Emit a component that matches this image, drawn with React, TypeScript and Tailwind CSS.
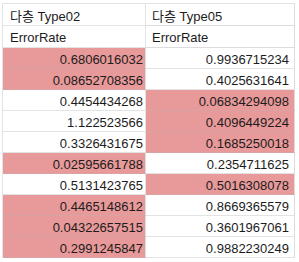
const ROWS: [string, boolean, string, boolean][] = [
  ['0.6806016032', true, '0.9936715234', false],
  ['0.08652708356', true, '0.4025631641', false],
  ['0.4454434268', false, '0.06834294098', true],
  ['1.122523566', false, '0.4096449224', true],
  ['0.3326431675', false, '0.1685250018', true],
  ['0.02595661788', true, '0.2354711625', false],
  ['0.5131423765', false, '0.5016308078', true],
  ['0.4465148612', true, '0.8669365579', false],
  ['0.04322657515', true, '0.3601967061', false],
  ['0.2991245847', true, '0.9882230249', false],
]

function Cell({ text, hot, right, pr }: { text: string; hot: boolean; right?: boolean; pr: string }) {
  return (
    <div
      className={`h-[21px] flex items-end justify-end pb-[1px] border-b border-r ${pr} ${
        hot ? 'bg-[#e8999a] border-b-[#d9a3a3]' : 'bg-white border-b-[#e3e3e3]'
      } ${right ? 'border-r-[#dcdcdc]' : hot ? 'border-r-[#dcdcdc]' : 'border-r-[#e3e3e3]'}`}
    >
      <span className="leading-[15px]">{text}</span>
    </div>
  )
}

export default function App() {
  return (
    <div
      className="w-[299px] h-[262px] bg-white overflow-hidden pt-[3px] pl-[2px] text-[13px] text-[#1c1c1c]"
      style={{ fontFamily: '"Liberation Sans", Arial, "Noto Sans CJK KR", sans-serif' }}
    >
      <div className="grid grid-cols-[143px_149px] w-[293px] border-t border-l border-[#e3e3e3]">
        <div className="h-[22px] flex items-end pl-[7px] pb-[1px] border-b border-r border-[#e3e3e3]">
          <span className="leading-[15px]">다층 Type02</span>
        </div>
        <div className="h-[22px] flex items-end pl-[6px] pb-[1px] border-b border-r border-[#dcdcdc]">
          <span className="leading-[15px]">다층 Type05</span>
        </div>
        <div className="h-[22px] flex items-end pl-[7px] pb-[2px] border-b border-r border-[#e3e3e3]">
          <span className="leading-[15px]">ErrorRate</span>
        </div>
        <div className="h-[22px] flex items-end pl-[6px] pb-[2px] border-b border-r border-[#dcdcdc]">
          <span className="leading-[15px]">ErrorRate</span>
        </div>
        {ROWS.map(([a, ha, b, hb], i) => (
          <div key={i} className="contents">
            <Cell text={a} hot={ha} pr="pr-[2px]" />
            <Cell text={b} hot={hb} right pr="pr-[5px]" />
          </div>
        ))}
      </div>
    </div>
  )
}
